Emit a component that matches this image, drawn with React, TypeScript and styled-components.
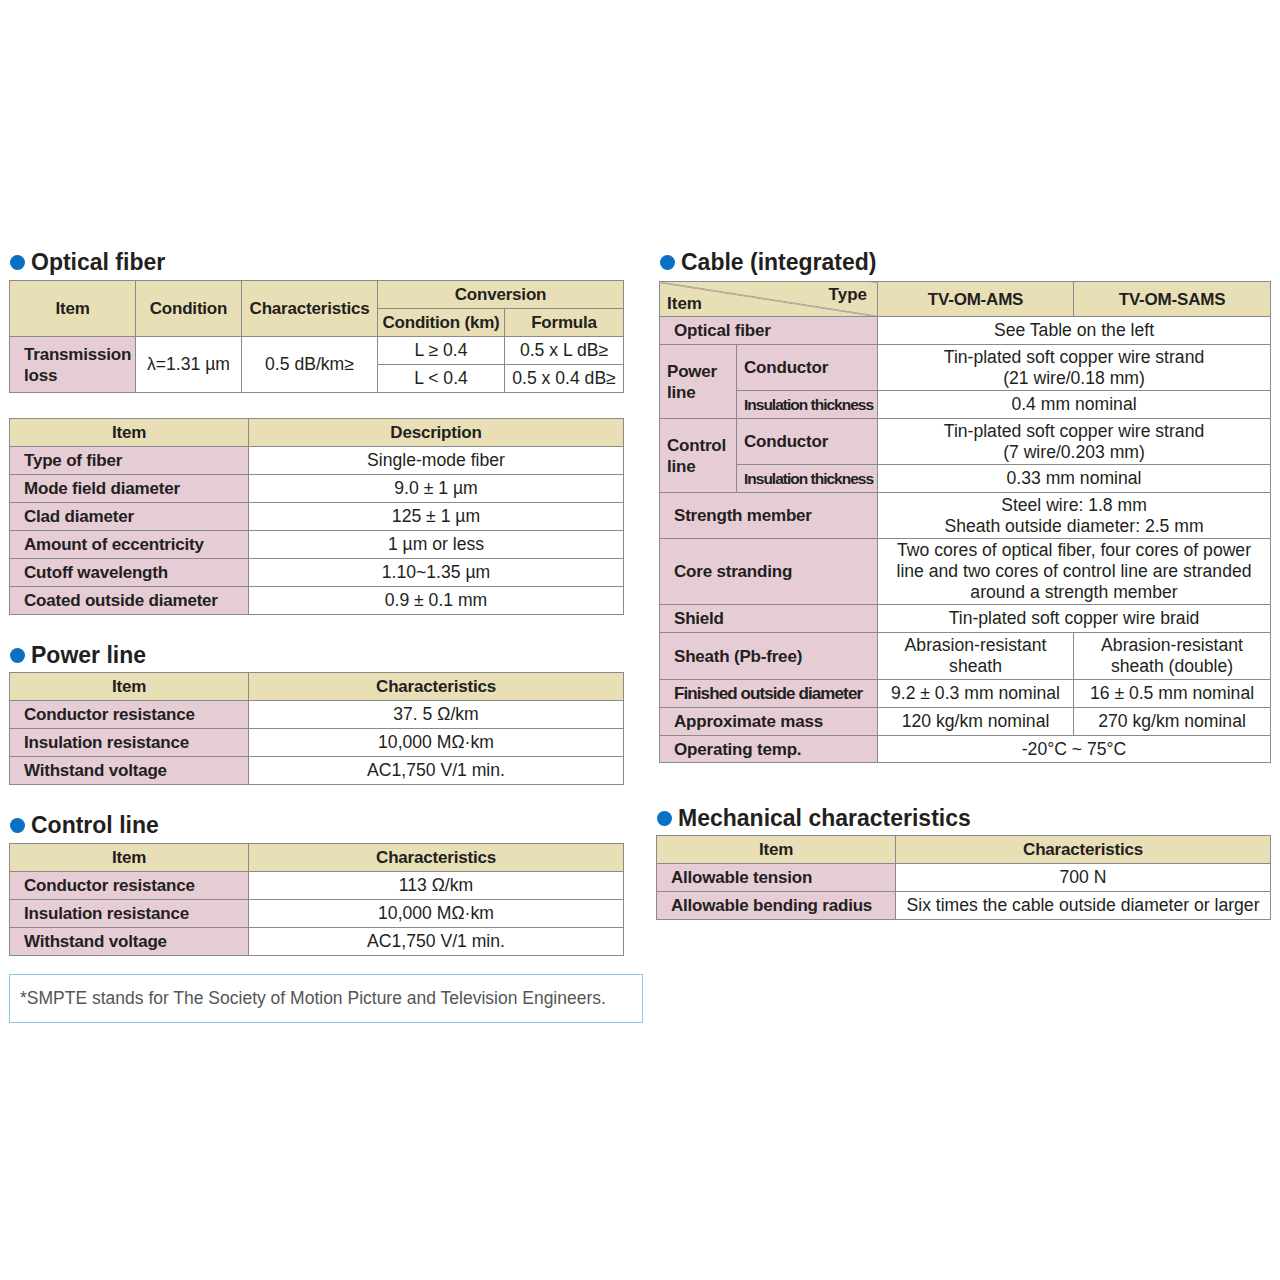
import React from "react";
import styled, { createGlobalStyle } from "styled-components";

const Global = createGlobalStyle`
  html, body { margin: 0; padding: 0; background: #ffffff; }
  body { font-family: "Liberation Sans", Arial, Helvetica, sans-serif; color: #231f20; }
`;

const Page = styled.div`
  display: flex;
  align-items: flex-start;
  gap: 13px;
  padding: 249px 0 0 9px;
  width: 1280px;
  height: 1280px;
  box-sizing: border-box;
`;

const Column = styled.div<{ $w: number }>`
  display: flex;
  flex-direction: column;
  align-items: flex-start;
  width: ${(p) => p.$w}px;
`;

const Heading = styled.h2<{ $mt?: number; $mb?: number; $ml?: number }>`
  display: flex;
  align-items: center;
  gap: 6px;
  margin: ${(p) => p.$mt ?? 0}px 0 ${(p) => p.$mb ?? 4}px ${(p) => p.$ml ?? 1}px;
  font-size: 23px;
  font-weight: 700;
  line-height: 27px;
  color: #231f20;
  &::before {
    content: "";
    width: 15px;
    height: 15px;
    border-radius: 50%;
    background: #0b6fc3;
    flex: none;
  }
`;

const Table = styled.table<{ $w: number; $mt?: number; $ml?: number }>`
  border-collapse: collapse;
  table-layout: fixed;
  width: ${(p) => p.$w}px;
  margin: ${(p) => p.$mt ?? 0}px 0 0 ${(p) => p.$ml ?? 0}px;
  border: 1px solid #767676;
  font-size: 17.6px;
  line-height: 21px;
`;

const Col = styled.col<{ $w: number }>`
  width: ${(p) => p.$w}px;
`;

const Row = styled.tr<{ $h: number }>`
  height: ${(p) => p.$h}px;
`;

const Head = styled.th`
  background: #e9dfb7;
  border: 1px solid #8a8a8a;
  font-weight: 700;
  font-size: 17px;
  text-align: center;
  padding: 0;
  letter-spacing: -0.2px;
`;

const Label = styled.td<{ $pl?: number; $narrow?: boolean; $tight?: boolean; $wrap?: boolean }>`
  background: #e6cdd5;
  border: 1px solid #8a8a8a;
  font-weight: 700;
  text-align: left;
  padding: 0 0 0 ${(p) => p.$pl ?? 14}px;
  letter-spacing: ${(p) => (p.$narrow ? "-1px" : p.$tight ? "-0.9px" : "-0.2px")};
  font-size: ${(p) => (p.$narrow ? "15.5px" : "17px")};
  white-space: ${(p) => (p.$wrap ? "normal" : "nowrap")};
`;

const Value = styled.td`
  background: #ffffff;
  border: 1px solid #8a8a8a;
  text-align: center;
  padding: 0;
`;

const DiagonalHead = styled.th`
  background: #e9dfb7
    linear-gradient(
      to top right,
      transparent calc(50% - 0.8px),
      #6f6f6f 50%,
      transparent calc(50% + 0.8px)
    );
  border: 1px solid #8a8a8a;
  padding: 0;
  font-weight: 700;
  font-size: 17px;
`;

const DiagonalInner = styled.div`
  display: grid;
  height: 34px;
  padding: 4px 10px 3px 7px;
  box-sizing: border-box;
  line-height: 18px;
`;

const DiagType = styled.span`
  grid-area: 1 / 1;
  justify-self: end;
  align-self: start;
`;

const DiagItem = styled.span`
  grid-area: 1 / 1;
  justify-self: start;
  align-self: end;
`;

const Note = styled.div`
  display: flex;
  align-items: center;
  width: 634px;
  height: 49px;
  margin-top: 18px;
  padding-left: 10px;
  box-sizing: border-box;
  border: 1px solid #83cfe6;
  font-size: 17.5px;
  color: #555555;
`;

const simpleRows = (rows: [string, string][]) =>
  rows.map(([a, b]) => (
    <Row $h={28} key={a}>
      <Label>{a}</Label>
      <Value>{b}</Value>
    </Row>
  ));

const TwoColTable: React.FC<{ head: string; rows: [string, string][]; mt?: number; left?: number }> = ({
  head,
  rows,
  mt,
  left = 239,
}) => (
  <Table $w={614} $mt={mt}>
    <colgroup>
      <Col $w={left} />
      <Col $w={614 - left} />
    </colgroup>
    <tbody>
      <Row $h={28}>
        <Head>Item</Head>
        <Head>{head}</Head>
      </Row>
      {simpleRows(rows)}
    </tbody>
  </Table>
);

export default function App() {
  return (
    <>
      <Global />
      <Page>
        <Column $w={634}>
          <Heading>Optical fiber</Heading>
          <Table $w={614}>
            <colgroup>
              <Col $w={126} />
              <Col $w={106} />
              <Col $w={136} />
              <Col $w={127} />
              <Col $w={119} />
            </colgroup>
            <tbody>
              <Row $h={28}>
                <Head rowSpan={2}>Item</Head>
                <Head rowSpan={2}>Condition</Head>
                <Head rowSpan={2}>Characteristics</Head>
                <Head colSpan={2}>Conversion</Head>
              </Row>
              <Row $h={28}>
                <Head>Condition (km)</Head>
                <Head>Formula</Head>
              </Row>
              <Row $h={28}>
                <Label rowSpan={2} $wrap>
                  Transmission
                  <br />
                  loss
                </Label>
                <Value rowSpan={2}>λ=1.31 µm</Value>
                <Value rowSpan={2}>0.5 dB/km≥</Value>
                <Value>L ≥ 0.4</Value>
                <Value>0.5 x L dB≥</Value>
              </Row>
              <Row $h={28}>
                <Value>L &lt; 0.4</Value>
                <Value>0.5 x 0.4 dB≥</Value>
              </Row>
            </tbody>
          </Table>

          <TwoColTable
            mt={25}
            head="Description"
            rows={[
              ["Type of fiber", "Single-mode fiber"],
              ["Mode field diameter", "9.0 ± 1 µm"],
              ["Clad diameter", "125 ± 1 µm"],
              ["Amount of eccentricity", "1 µm or less"],
              ["Cutoff wavelength", "1.10~1.35 µm"],
              ["Coated outside diameter", "0.9 ± 0.1 mm"],
            ]}
          />

          <Heading $mt={27} $mb={3}>
            Power line
          </Heading>
          <TwoColTable
            head="Characteristics"
            rows={[
              ["Conductor resistance", "37. 5 Ω/km"],
              ["Insulation resistance", "10,000 MΩ·km"],
              ["Withstand voltage", "AC1,750 V/1 min."],
            ]}
          />

          <Heading $mt={27} $mb={4}>
            Control line
          </Heading>
          <TwoColTable
            head="Characteristics"
            rows={[
              ["Conductor resistance", "113 Ω/km"],
              ["Insulation resistance", "10,000 MΩ·km"],
              ["Withstand voltage", "AC1,750 V/1 min."],
            ]}
          />

          <Note>*SMPTE stands for The Society of Motion Picture and Television Engineers.</Note>
        </Column>

        <Column $w={614}>
          <Heading $ml={4} $mb={5}>
            Cable (integrated)
          </Heading>
          <Table $w={611} $ml={3}>
            <colgroup>
              <Col $w={77} />
              <Col $w={141} />
              <Col $w={196} />
              <Col $w={197} />
            </colgroup>
            <tbody>
              <Row $h={35}>
                <DiagonalHead colSpan={2}>
                  <DiagonalInner>
                    <DiagType>Type</DiagType>
                    <DiagItem>Item</DiagItem>
                  </DiagonalInner>
                </DiagonalHead>
                <Head>TV-OM-AMS</Head>
                <Head>TV-OM-SAMS</Head>
              </Row>
              <Row $h={28}>
                <Label colSpan={2}>Optical fiber</Label>
                <Value colSpan={2}>See Table on the left</Value>
              </Row>
              <Row $h={46}>
                <Label rowSpan={2} $pl={7}>
                  Power
                  <br />
                  line
                </Label>
                <Label $pl={7}>Conductor</Label>
                <Value colSpan={2}>
                  Tin-plated soft copper wire strand
                  <br />
                  (21 wire/0.18 mm)
                </Value>
              </Row>
              <Row $h={28}>
                <Label $pl={7} $narrow>
                  Insulation thickness
                </Label>
                <Value colSpan={2}>0.4 mm nominal</Value>
              </Row>
              <Row $h={46}>
                <Label rowSpan={2} $pl={7}>
                  Control
                  <br />
                  line
                </Label>
                <Label $pl={7}>Conductor</Label>
                <Value colSpan={2}>
                  Tin-plated soft copper wire strand
                  <br />
                  (7 wire/0.203 mm)
                </Value>
              </Row>
              <Row $h={28}>
                <Label $pl={7} $narrow>
                  Insulation thickness
                </Label>
                <Value colSpan={2}>0.33 mm nominal</Value>
              </Row>
              <Row $h={46}>
                <Label colSpan={2}>Strength member</Label>
                <Value colSpan={2}>
                  Steel wire: 1.8 mm
                  <br />
                  Sheath outside diameter: 2.5 mm
                </Value>
              </Row>
              <Row $h={66}>
                <Label colSpan={2}>Core stranding</Label>
                <Value colSpan={2}>
                  Two cores of optical fiber, four cores of power
                  <br />
                  line and two cores of control line are stranded
                  <br />
                  around a strength member
                </Value>
              </Row>
              <Row $h={28}>
                <Label colSpan={2}>Shield</Label>
                <Value colSpan={2}>Tin-plated soft copper wire braid</Value>
              </Row>
              <Row $h={47}>
                <Label colSpan={2}>Sheath (Pb-free)</Label>
                <Value>
                  Abrasion-resistant
                  <br />
                  sheath
                </Value>
                <Value>
                  Abrasion-resistant
                  <br />
                  sheath (double)
                </Value>
              </Row>
              <Row $h={28}>
                <Label colSpan={2} $tight>
                  Finished outside diameter
                </Label>
                <Value>9.2 ± 0.3 mm nominal</Value>
                <Value>16 ± 0.5 mm nominal</Value>
              </Row>
              <Row $h={28}>
                <Label colSpan={2}>Approximate mass</Label>
                <Value>120 kg/km nominal</Value>
                <Value>270 kg/km nominal</Value>
              </Row>
              <Row $h={27}>
                <Label colSpan={2}>Operating temp.</Label>
                <Value colSpan={2}>-20°C ~ 75°C</Value>
              </Row>
            </tbody>
          </Table>

          <Heading $mt={42} $ml={1} $mb={3}>
            Mechanical characteristics
          </Heading>
          <TwoColTable
            head="Characteristics"
            rows={[
              ["Allowable tension", "700 N"],
              ["Allowable bending radius", "Six times the cable outside diameter or larger"],
            ]}
          />
        </Column>
      </Page>
    </>
  );
}
